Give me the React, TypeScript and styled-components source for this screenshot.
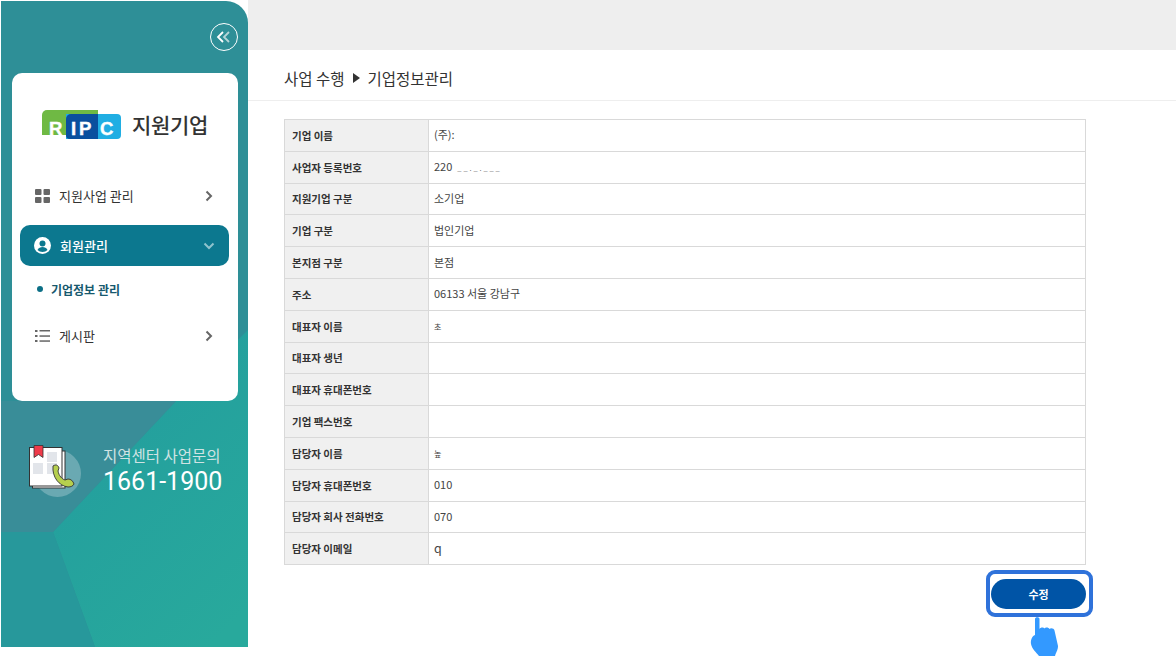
import * as React from 'react'
import styled, { createGlobalStyle } from 'styled-components'

const GlobalStyle = createGlobalStyle`
  html, body {
    margin: 0;
    padding: 0;
    background: #fff;
    font-family: "Noto Sans CJK KR", "Noto Sans", sans-serif;
  }
`

const Page = styled.div`
  width: 1176px;
  height: 664px;
  display: flex;
  overflow: hidden;
  background: #fff;
`

const Sidebar = styled.aside`
  position: relative;
  flex: none;
  width: 247px;
  height: 646px;
  margin: 1px 0 0 1px;
  padding: 22px 10px 0 11px;
  box-sizing: border-box;
  border-radius: 0 22px 0 0;
  overflow: hidden;
  background: #2e8f97;
  display: flex;
  flex-direction: column;
`

const SidebarArt = styled.svg`
  position: absolute;
  left: 0;
  top: 0;
`

const CollapseButton = styled.button`
  position: relative;
  align-self: flex-end;
  width: 28px;
  height: 28px;
  padding: 0;
  border: 1.5px solid #fff;
  border-radius: 50%;
  background: transparent;
  display: flex;
  align-items: center;
  justify-content: center;
`

const MenuCard = styled.div`
  position: relative;
  margin-top: 22px;
  height: 328px;
  box-sizing: border-box;
  padding: 0 9px 0 8px;
  border-radius: 10px;
  background: #fff;
`

const LogoRow = styled.div`
  height: 102px;
  padding-left: 22px;
  display: flex;
  align-items: center;
  gap: 10px;
`

const LogoTitle = styled.span`
  font-size: 21px;
  font-weight: 500;
  color: #333;
  letter-spacing: -0.3px;
`

const MenuItem = styled.div<{ $active?: boolean }>`
  height: 41px;
  padding: 0 14px;
  margin-bottom: ${(p) => (p.$active ? 0 : 9)}px;
  display: flex;
  align-items: center;
  gap: 9px;
  border-radius: 10px;
  font-size: 13px;
  font-weight: ${(p) => (p.$active ? 500 : 400)};
  background: ${(p) => (p.$active ? '#0c788f' : 'transparent')};
  color: ${(p) => (p.$active ? '#fff' : '#333')};
`

const MenuLabel = styled.span`
  flex: 1;
`

const SubItem = styled.div`
  height: 49px;
  padding: 0 0 3px 17px;
  box-sizing: border-box;
  display: flex;
  align-items: center;
  gap: 8px;
  font-size: 12px;
  font-weight: 700;
  color: #17596e;
`

const SubDot = styled.i`
  width: 6px;
  height: 6px;
  border-radius: 50%;
  background: #0c6f86;
`

const Contact = styled.div`
  position: relative;
  margin-top: 44px;
  padding-left: 17px;
  display: flex;
  align-items: flex-start;
  gap: 22px;
`

const ContactText = styled.div`
  display: flex;
  flex-direction: column;
  margin-top: -1px;
`

const ContactLabel = styled.span`
  font-size: 15.5px;
  line-height: 23px;
  color: #cfe3e3;
`

const ContactPhone = styled.span`
  font-family: Roboto, "Noto Sans", sans-serif;
  font-size: 25px;
  line-height: 29px;
  color: #fff;
`

const Main = styled.main`
  flex: 1;
  min-width: 0;
  display: flex;
  flex-direction: column;
`

const TopBar = styled.div`
  height: 50px;
  background: #eeeeee;
`

const TitleBar = styled.div`
  height: 45px;
  padding: 5px 0 0 36px;
  display: flex;
  align-items: center;
  gap: 8px;
  border-bottom: 1px solid #eeeeee;
  font-size: 15.5px;
  color: #333;
`

const Caret = styled.i`
  flex: none;
  width: 0;
  height: 0;
  border-left: 7px solid #333;
  border-top: 5.5px solid transparent;
  border-bottom: 5.5px solid transparent;
`

const Content = styled.div`
  padding: 18px 0 0 36px;
  width: 802px;
`

const Table = styled.table`
  width: 802px;
  border-collapse: collapse;
  table-layout: fixed;
  font-size: 11px;
`

const Row = styled.tr`
  height: 31.8px;
`

const LabelCell = styled.th`
  width: 144px;
  padding: 0 0 0 7px;
  box-sizing: border-box;
  border: 1px solid #d9d9d9;
  background: #f0f0f0;
  text-align: left;
  font-weight: 700;
  font-size: 10.5px;
  color: #333;
`

const ValueCell = styled.td`
  padding: 0 0 2px 5px;
  border: 1px solid #d9d9d9;
  color: #444;
`

const Masked = styled.span`
  margin-left: 5px;
  font-size: 7.5px;
  letter-spacing: 0.1px;
  color: #777;
`

const SmallValue = styled.span`
  font-size: 8px;
`

const LargeValue = styled.span`
  font-size: 12.5px;
`

const Actions = styled.div`
  display: flex;
  justify-content: flex-end;
  margin-top: 14px;
`

const EditButton = styled.button`
  position: relative;
  width: 95px;
  height: 30px;
  padding: 0;
  border: 0;
  border-radius: 15px;
  background: #0054a6;
  color: #fff;
  font-family: inherit;
  font-size: 11px;
  font-weight: 700;
`

const Highlight = styled.span`
  position: absolute;
  left: -5px;
  top: -9px;
  width: 107px;
  height: 47px;
  box-sizing: border-box;
  border: 4.5px solid #2f72da;
  border-radius: 9px;
`

const Pointer = styled.svg`
  position: absolute;
  left: 38px;
  top: 37px;
`

const rows: [string, React.ReactNode][] = [
  ['기업 이름', '(주):'],
  ['사업자 등록번호', <>220<Masked>_ _ . _ . _ _ _</Masked></>],
  ['지원기업 구분', '소기업'],
  ['기업 구분', '법인기업'],
  ['본지점 구분', '본점'],
  ['주소', '06133 서울 강남구'],
  ['대표자 이름', <SmallValue>초</SmallValue>],
  ['대표자 생년', ''],
  ['대표자 휴대폰번호', ''],
  ['기업 팩스번호', ''],
  ['담당자 이름', <SmallValue>높</SmallValue>],
  ['담당자 휴대폰번호', '010'],
  ['담당자 회사 전화번호', '070'],
  ['담당자 이메일', <LargeValue>q</LargeValue>],
]

const Chevron = ({ color, down }: { color: string; down?: boolean }) => (
  <svg width="12" height="12" viewBox="0 0 12 12" fill="none" stroke={color} strokeWidth="2">
    <path d={down ? 'M1.5 3.5 6 8l4.5-4.5' : 'M3.5 1.5 8 6l-4.5 4.5'} />
  </svg>
)

const Logo = () => (
  <svg width="80" height="29" viewBox="0 0 80 29">
    <path d="M0 5a5 5 0 0 1 5-5h51v25H0z" fill="#6fb944" />
    <path d="M24 4h51a4 4 0 0 1 4 4v17a4 4 0 0 1-4 4H24z" fill="#20aee3" />
    <path d="M24 9a5 5 0 0 1 5-5h27v25H28a4 4 0 0 1-4-4z" fill="#0a4f9e" />
    <text x="7 29 37 58" y="25" fontFamily="Liberation Sans" fontWeight="700" fontSize="18.500" fill="#fff" stroke="#fff" strokeWidth="0.4">RIPC</text>
  </svg>
)

const BookIcon = () => (
  <svg width="52" height="53" viewBox="0 0 52 53">
    <circle cx="28.500" cy="28.500" r="23.500" fill="#fff" opacity="0.25" />
    <rect x="3.500" y="6" width="32.500" height="37" fill="#fff" stroke="#333" strokeWidth="1" />
    <rect x="0.500" y="2.500" width="32.500" height="38.500" fill="#fff" stroke="#333" strokeWidth="1" />
    <path d="M5 0.500h9v12l-4.500-3-4.500 3z" fill="#ef3b4a" stroke="#333" strokeWidth="0.8" />
    <g fill="#e2e5ea">
      <rect x="18" y="7" width="10" height="10" />
      <rect x="4" y="18" width="10" height="11" />
      <rect x="18" y="18" width="10" height="11" />
    </g>
    <path d="M24 21c3-2 5-1 6 2l-1 3c1 5 4 8 7 9l3-1c3 0 5 2 6 5-1 2-3 3-6 3-9-1-16-10-15-21z" fill="#b6cf4e" stroke="#333" strokeWidth="0.9" />
  </svg>
)

export default function App() {
  return (
    <Page>
      <GlobalStyle />
      <Sidebar>
        <SidebarArt width="248" height="646" viewBox="0 0 248 646">
          <defs>
            <linearGradient id="teal" x1="0.2" y1="0" x2="0.8" y2="1">
              <stop offset="0" stopColor="#229c9e" />
              <stop offset="1" stopColor="#28a99c" />
            </linearGradient>
          </defs>
          <path d="M248 328V646H94L52 531 175 400z" fill="url(#teal)" />
          <path d="M0 531H52L94 646H0z" fill="#27989b" />
          <path d="M0 400H175L52 531H0z" fill="#398d98" />
        </SidebarArt>
        <CollapseButton aria-label="메뉴 접기">
          <svg width="16" height="12" viewBox="0 0 16 12" fill="none" strokeWidth="1.8">
            <path d="M7 1 2 6l5 5" stroke="#fff" />
            <path d="M13 1 8 6l5 5" stroke="#b5d5d8" />
          </svg>
        </CollapseButton>
        <MenuCard>
          <LogoRow>
            <Logo />
            <LogoTitle>지원기업</LogoTitle>
          </LogoRow>
          <MenuItem>
            <svg width="16" height="16" viewBox="-1 0 16 16" fill="#666">
              <rect x="0" y="1" width="6.500" height="6" rx="1" />
              <rect x="8.500" y="1" width="6.500" height="6" rx="1" />
              <rect x="0" y="9" width="6.500" height="6" rx="1" />
              <rect x="8.500" y="9" width="6.500" height="6" rx="1" />
            </svg>
            <MenuLabel>지원사업 관리</MenuLabel>
            <Chevron color="#666" />
          </MenuItem>
          <MenuItem $active>
            <svg width="17" height="17" viewBox="0 0 17 17">
              <circle cx="8.5" cy="8.5" r="8.5" fill="#fff" />
              <circle cx="8.5" cy="6.5" r="3" fill="#0c788f" />
              <path d="M3.5 13c1-2.2 3-3 5-3s4 .8 5 3c-1.300 1.300-3 2-5 2s-3.700-.7-5-2z" fill="#0c788f" />
            </svg>
            <MenuLabel>회원관리</MenuLabel>
            <Chevron color="#8fc3cd" down />
          </MenuItem>
          <SubItem>
            <SubDot />
            기업정보 관리
          </SubItem>
          <MenuItem>
            <svg width="16" height="14" viewBox="-1 0 16 14" fill="#666">
              <rect x="0" y="1" width="2.500" height="2" />
              <rect x="4.500" y="1" width="10.500" height="1.500" />
              <rect x="0" y="6" width="2.500" height="2" />
              <rect x="4.500" y="6.300" width="10.500" height="1.500" />
              <rect x="0" y="11" width="2.500" height="2" />
              <rect x="4.500" y="11.300" width="10.500" height="1.500" />
            </svg>
            <MenuLabel>게시판</MenuLabel>
            <Chevron color="#666" />
          </MenuItem>
        </MenuCard>
        <Contact>
          <BookIcon />
          <ContactText>
            <ContactLabel>지역센터 사업문의</ContactLabel>
            <ContactPhone>1661-1900</ContactPhone>
          </ContactText>
        </Contact>
      </Sidebar>
      <Main>
        <TopBar />
        <TitleBar>
          사업 수행
          <Caret />
          기업정보관리
        </TitleBar>
        <Content>
          <Table>
            <tbody>
              {rows.map(([label, value]) => (
                <Row key={label}>
                  <LabelCell>{label}</LabelCell>
                  <ValueCell>{value}</ValueCell>
                </Row>
              ))}
            </tbody>
          </Table>
          <Actions>
            <EditButton>
              수정
              <Highlight />
              <Pointer width="32" height="42" viewBox="0 0 32 42">
                <path
                  d="M6 3c0-2.500 4.500-2.500 4.500 0v10c1-2 4-2 5-.5 1-1.500 4-1.500 5 .5 1-1.500 4.500-1 5 1.500L29 30c0 4-1.500 5-3 10H10C7 36 3 33 2 28c-.5-4 1-8 4-9z"
                  fill="#3399ff"
                />
              </Pointer>
            </EditButton>
          </Actions>
        </Content>
      </Main>
    </Page>
  )
}
